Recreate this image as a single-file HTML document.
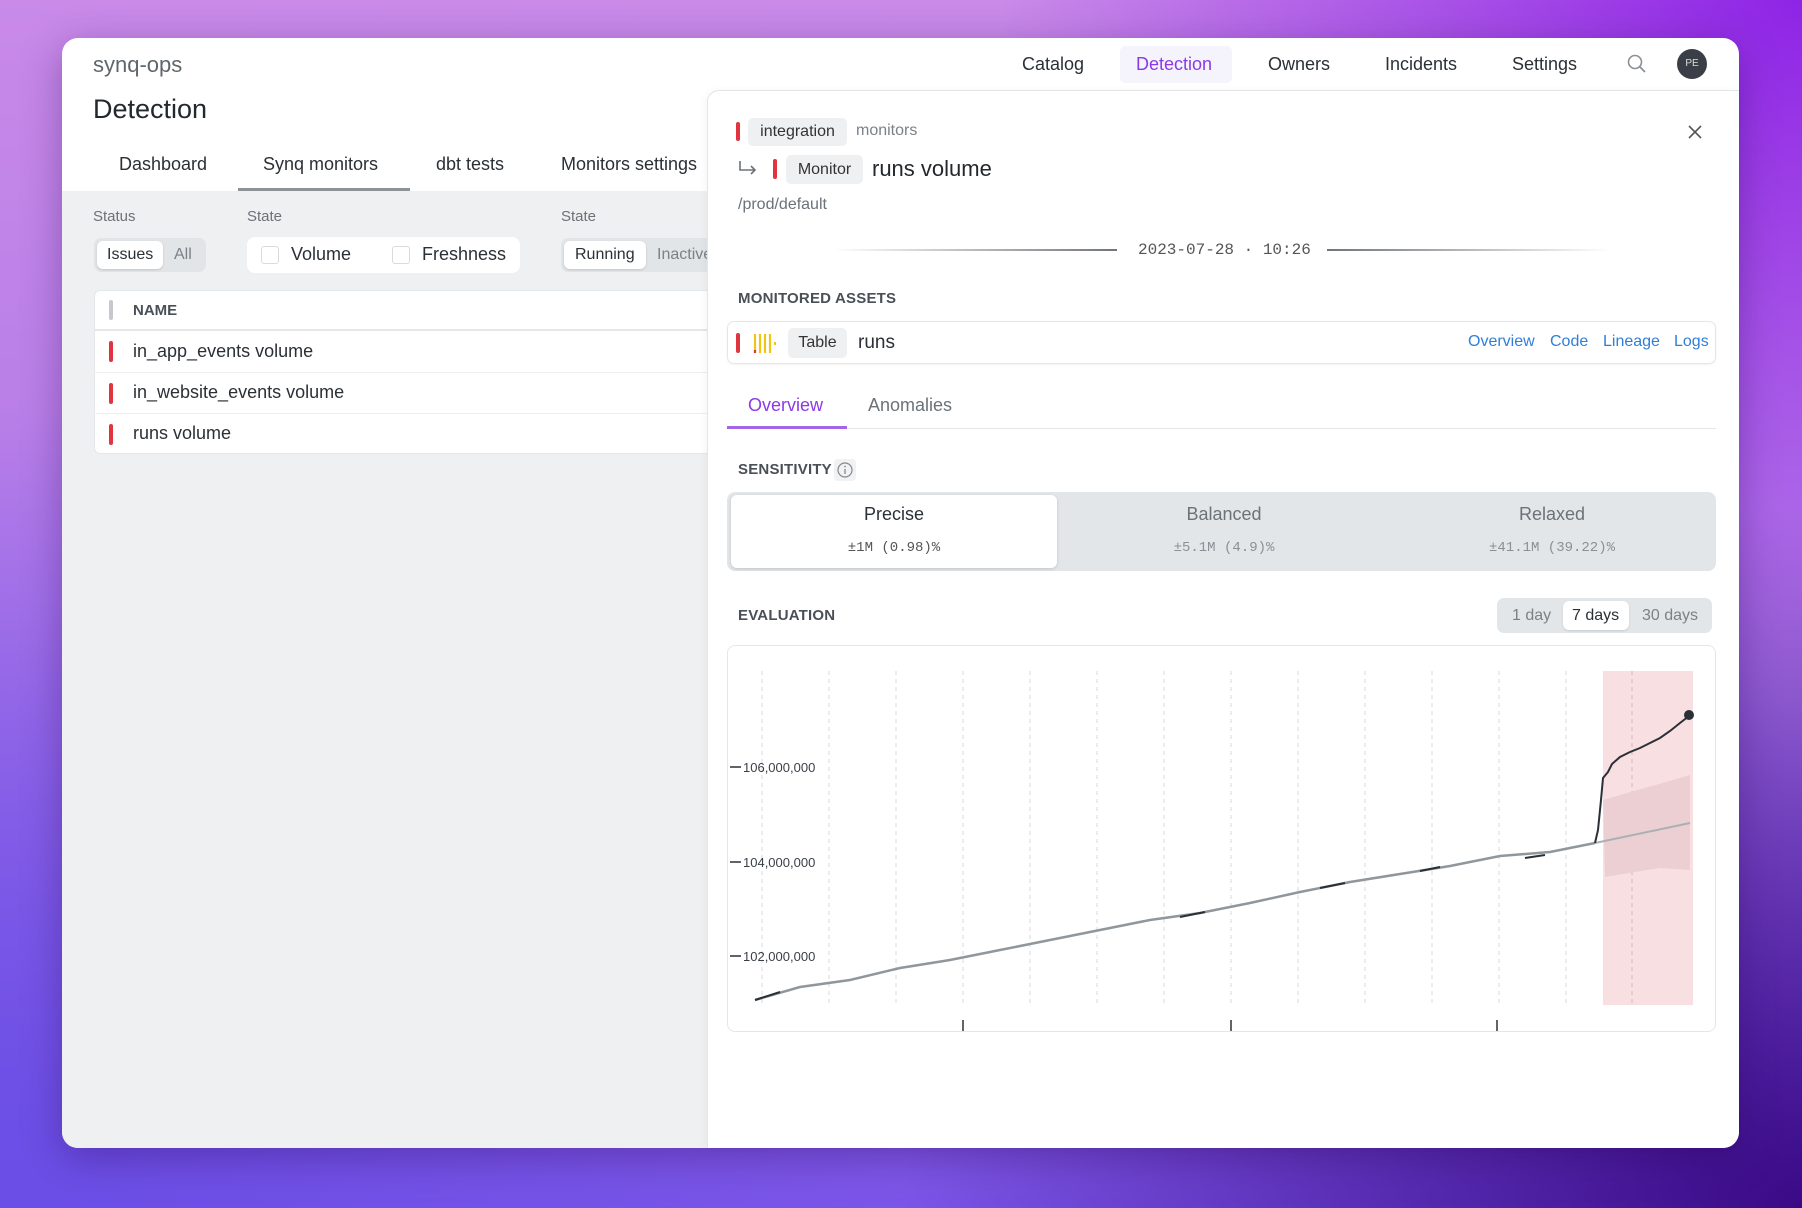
<!DOCTYPE html>
<html><head><meta charset="utf-8"><style>
*{box-sizing:border-box;margin:0;padding:0}
body{width:1802px;height:1208px;overflow:hidden;position:relative;font-family:"Liberation Sans",sans-serif;color:#2b3036;
background:
radial-gradient(ellipse 900px 700px at 1802px 1208px,#3a0a86 0%,rgba(58,10,134,0) 100%),
radial-gradient(ellipse 900px 800px at 0px 1208px,#6a4ee6 0%,rgba(106,78,230,0) 100%),
radial-gradient(ellipse 800px 700px at 1802px 0px,#8e24e6 0%,rgba(142,36,230,0) 100%),
linear-gradient(180deg,#c98ae8 0%,#b27ae8 50%,#7b55e8 100%);}
.a{position:absolute;white-space:nowrap}
.win{position:absolute;left:62px;top:38px;width:1677px;height:1110px;background:#fff;border-radius:16px;overflow:hidden;box-shadow:0 10px 40px rgba(40,0,90,.35)}
.gray{position:absolute;left:62px;top:191px;width:646px;height:957px;background:#eef0f2;border-radius:0 0 0 16px}
.tag{position:absolute;background:#eef0f2;border-radius:5px;color:#333;font-size:16px;text-align:center}
.bar{position:absolute;width:4px;border-radius:2px;background:#e0343f}
.lbl{font-weight:bold;font-size:15px;color:#4a5057;letter-spacing:.2px}
.link{color:#2f7fd8;font-size:16px}
.mono{font-family:"Liberation Mono",monospace}
</style></head><body>
<div class="win"></div>
<div class="gray"></div>

<div class="a" style="left:93px;top:52px;font-size:22px;color:#5f676d">synq-ops</div>
<div class="a" style="left:93px;top:94px;font-size:27px;color:#23282d">Detection</div>

<!-- top nav -->
<div class="a" style="left:1120px;top:46px;width:112px;height:37px;background:#f5f3fb;border-radius:6px"></div>
<div class="a" style="left:1022px;top:54px;font-size:18px">Catalog</div>
<div class="a" style="left:1136px;top:54px;font-size:18px;color:#8a3ae6">Detection</div>
<div class="a" style="left:1268px;top:54px;font-size:18px">Owners</div>
<div class="a" style="left:1385px;top:54px;font-size:18px">Incidents</div>
<div class="a" style="left:1512px;top:54px;font-size:18px">Settings</div>
<svg class="a" style="left:1625px;top:52px" width="24" height="24" viewBox="0 0 24 24"><circle cx="10" cy="10" r="6.5" fill="none" stroke="#8a9096" stroke-width="1.6"/><line x1="15" y1="15" x2="20" y2="20" stroke="#8a9096" stroke-width="1.8"/></svg>
<div class="a" style="left:1677px;top:49px;width:30px;height:30px;border-radius:50%;background:#3a3f47;color:#ddd;font-size:10px;text-align:center;line-height:30px">PE</div>

<!-- left tabs -->
<div class="a" style="left:119px;top:154px;font-size:18px">Dashboard</div>
<div class="a" style="left:263px;top:154px;font-size:18px">Synq monitors</div>
<div class="a" style="left:436px;top:154px;font-size:18px">dbt tests</div>
<div class="a" style="left:561px;top:154px;font-size:18px">Monitors settings</div>
<div class="a" style="left:238px;top:188px;width:172px;height:3px;background:#8d9297"></div>

<div class="a" style="left:93px;top:208px;font-size:15px;color:#6b7278">Status</div>
<div class="a" style="left:247px;top:208px;font-size:15px;color:#6b7278">State</div>
<div class="a" style="left:561px;top:208px;font-size:15px;color:#6b7278">State</div>

<div class="a" style="left:94px;top:238px;width:112px;height:34px;background:#e2e5e8;border-radius:7px"></div>
<div class="a" style="left:97px;top:241px;width:66px;height:28px;background:#fff;border-radius:6px;box-shadow:0 1px 2px rgba(0,0,0,.15)"></div>
<div class="a" style="left:107px;top:246px;font-size:16px">Issues</div>
<div class="a" style="left:174px;top:246px;font-size:16px;color:#7b8187">All</div>

<div class="a" style="left:247px;top:237px;width:273px;height:36px;background:#fff;border-radius:8px"></div>
<div class="a" style="left:261px;top:246px;width:18px;height:18px;border:1px solid #d8dce0;border-radius:3px"></div>
<div class="a" style="left:291px;top:244px;font-size:18px">Volume</div>
<div class="a" style="left:392px;top:246px;width:18px;height:18px;border:1px solid #d8dce0;border-radius:3px"></div>
<div class="a" style="left:422px;top:244px;font-size:18px">Freshness</div>

<div class="a" style="left:561px;top:238px;width:147px;height:34px;background:#e2e5e8;border-radius:7px 0 0 7px"></div>
<div class="a" style="left:564px;top:241px;width:82px;height:28px;background:#fff;border-radius:6px;box-shadow:0 1px 2px rgba(0,0,0,.15)"></div>
<div class="a" style="left:575px;top:246px;font-size:16px">Running</div>
<div class="a" style="left:657px;top:246px;font-size:16px;color:#7b8187;width:51px;overflow:hidden">Inactive</div>

<!-- table -->
<div class="a" style="left:94px;top:290px;width:614px;height:164px;background:#fff;border-radius:6px 0 0 6px;border:1px solid #e4e7ea;border-right:none"></div>
<div class="a" style="left:109px;top:300px;width:4px;height:20px;border-radius:2px;background:#c5c9cd"></div>
<div class="a" style="left:133px;top:302px;font-size:15px;font-weight:bold;color:#4a5057">NAME</div>
<div class="a" style="left:94px;top:329px;width:614px;height:2px;background:#e4e7ea"></div>
<div class="a" style="left:94px;top:372px;width:614px;height:1px;background:#eceef0"></div>
<div class="a" style="left:94px;top:413px;width:614px;height:1px;background:#eceef0"></div>
<div class="bar" style="left:109px;top:341px;height:21px"></div>
<div class="bar" style="left:109px;top:383px;height:21px"></div>
<div class="bar" style="left:109px;top:424px;height:21px"></div>
<div class="a" style="left:133px;top:341px;font-size:18px">in_app_events volume</div>
<div class="a" style="left:133px;top:382px;font-size:18px">in_website_events volume</div>
<div class="a" style="left:133px;top:423px;font-size:18px">runs volume</div>

<!-- right panel -->
<div class="a" style="left:707px;top:90px;width:1032px;height:1058px;background:#fff;border:1px solid #e3e6e9;border-right:none;border-bottom:none;border-radius:12px 0 16px 0;box-shadow:-2px 0 8px rgba(0,0,0,.04)"></div>

<div class="bar" style="left:736px;top:122px;height:19px"></div>
<div class="tag" style="left:748px;top:118px;width:99px;height:28px;line-height:28px">integration</div>
<div class="a" style="left:856px;top:122px;font-size:16px;color:#7b8187">monitors</div>
<svg class="a" style="left:1687px;top:124px" width="16" height="16" viewBox="0 0 16 16"><path d="M2 2L14 14M14 2L2 14" stroke="#555" stroke-width="1.6"/></svg>

<svg class="a" style="left:737px;top:159px" width="22" height="20" viewBox="0 0 22 20"><path d="M3 2V11H18M14 7L18 11L14 15" fill="none" stroke="#6b7278" stroke-width="1.6"/></svg>
<div class="bar" style="left:773px;top:159px;height:20px"></div>
<div class="tag" style="left:786px;top:155px;width:77px;height:29px;line-height:29px">Monitor</div>
<div class="a" style="left:872px;top:156px;font-size:22px;color:#23282d">runs volume</div>
<div class="a" style="left:738px;top:196px;font-size:16px;color:#6b7278">/prod/default</div>

<div class="a" style="left:833px;top:249px;width:284px;height:2px;background:linear-gradient(90deg,rgba(120,125,130,0),#6f757b)"></div>
<div class="a mono" style="left:1138px;top:241px;font-size:16px;color:#555">2023-07-28 · 10:26</div>
<div class="a" style="left:1327px;top:249px;width:284px;height:2px;background:linear-gradient(90deg,#6f757b,rgba(120,125,130,0))"></div>

<div class="a lbl" style="left:738px;top:290px">MONITORED ASSETS</div>
<div class="a" style="left:727px;top:321px;width:989px;height:43px;border:1px solid #e4e7ea;border-radius:7px;box-shadow:0 1px 2px rgba(0,0,0,.05)"></div>
<div class="bar" style="left:736px;top:333px;height:20px"></div>
<svg class="a" style="left:753px;top:333px" width="26" height="22" viewBox="0 0 26 22"><g stroke="#f2c418" stroke-width="2.2"><line x1="2" y1="1" x2="2" y2="20"/><line x1="7" y1="1" x2="7" y2="20"/><line x1="12" y1="1" x2="12" y2="20"/><line x1="17" y1="1" x2="17" y2="20"/></g><line x1="2" y1="17" x2="2" y2="20" stroke="#e0343f" stroke-width="2.2"/><rect x="21" y="9" width="2" height="3" fill="#f2c418"/></svg>
<div class="tag" style="left:788px;top:328px;width:59px;height:30px;line-height:30px">Table</div>
<div class="a" style="left:858px;top:332px;font-size:19px">runs</div>
<div class="a link" style="left:1468px;top:333px">Overview</div>
<div class="a link" style="left:1550px;top:333px">Code</div>
<div class="a link" style="left:1603px;top:333px">Lineage</div>
<div class="a link" style="left:1674px;top:333px">Logs</div>

<div class="a" style="left:748px;top:395px;font-size:18px;color:#8a3ae6">Overview</div>
<div class="a" style="left:868px;top:395px;font-size:18px;color:#6b7278">Anomalies</div>
<div class="a" style="left:727px;top:428px;width:989px;height:1px;background:#e4e7ea"></div>
<div class="a" style="left:727px;top:426px;width:120px;height:3px;background:#a466e8"></div>

<div class="a lbl" style="left:738px;top:461px">SENSITIVITY</div>
<div class="a" style="left:834px;top:459px;width:22px;height:22px;background:#f0f2f4;border-radius:4px"></div>
<svg class="a" style="left:836px;top:461px" width="18" height="18" viewBox="0 0 18 18"><circle cx="9" cy="9" r="7" fill="none" stroke="#888" stroke-width="1.2"/><line x1="9" y1="8" x2="9" y2="13" stroke="#888" stroke-width="1.3"/><circle cx="9" cy="5.5" r=".9" fill="#888"/></svg>

<div class="a" style="left:727px;top:492px;width:989px;height:79px;background:#e2e6e9;border-radius:8px"></div>
<div class="a" style="left:731px;top:495px;width:326px;height:73px;background:#fff;border-radius:6px;box-shadow:0 1px 3px rgba(0,0,0,.15)"></div>
<div class="a" style="left:731px;top:504px;width:326px;text-align:center;font-size:18px">Precise</div>
<div class="a mono" style="left:731px;top:540px;width:326px;text-align:center;font-size:14px;color:#555">±1M (0.98)%</div>
<div class="a" style="left:1060px;top:504px;width:328px;text-align:center;font-size:18px;color:#6b7278">Balanced</div>
<div class="a mono" style="left:1060px;top:540px;width:328px;text-align:center;font-size:14px;color:#8a9096">±5.1M (4.9)%</div>
<div class="a" style="left:1388px;top:504px;width:328px;text-align:center;font-size:18px;color:#6b7278">Relaxed</div>
<div class="a mono" style="left:1388px;top:540px;width:328px;text-align:center;font-size:14px;color:#8a9096">±41.1M (39.22)%</div>

<div class="a lbl" style="left:738px;top:607px">EVALUATION</div>
<div class="a" style="left:1497px;top:598px;width:215px;height:35px;background:#e2e6e9;border-radius:7px"></div>
<div class="a" style="left:1563px;top:601px;width:66px;height:29px;background:#fff;border-radius:6px;box-shadow:0 1px 2px rgba(0,0,0,.12)"></div>
<div class="a" style="left:1512px;top:607px;font-size:16px;color:#7b8187">1 day</div>
<div class="a" style="left:1572px;top:607px;font-size:16px">7 days</div>
<div class="a" style="left:1642px;top:607px;font-size:16px;color:#7b8187">30 days</div>

<div class="a" style="left:727px;top:645px;width:989px;height:387px;border:1px solid #e4e7ea;border-radius:8px"></div>
<svg class="a" style="left:0;top:0" width="1802" height="1208">
<rect x="1603" y="671" width="90" height="334" fill="#f8e0e2"/>
<g stroke="#d6d9dc" stroke-width="1" stroke-dasharray="4,4">
<line x1="762" y1="671" x2="762" y2="1005"/><line x1="829" y1="671" x2="829" y2="1005"/><line x1="896" y1="671" x2="896" y2="1005"/><line x1="963" y1="671" x2="963" y2="1005"/><line x1="1030" y1="671" x2="1030" y2="1005"/><line x1="1097" y1="671" x2="1097" y2="1005"/><line x1="1164" y1="671" x2="1164" y2="1005"/><line x1="1231" y1="671" x2="1231" y2="1005"/><line x1="1298" y1="671" x2="1298" y2="1005"/><line x1="1365" y1="671" x2="1365" y2="1005"/><line x1="1432" y1="671" x2="1432" y2="1005"/><line x1="1499" y1="671" x2="1499" y2="1005"/><line x1="1566" y1="671" x2="1566" y2="1005"/><line x1="1632" y1="671" x2="1632" y2="1005" stroke="#d8b4b8"/>
</g>
<path d="M1603 800 L1690 775 L1690 870 L1660 868 L1605 877 Z" fill="#eccfd3"/>
<path d="M1595 843 L1690 823" stroke="#a9b1b6" stroke-width="2" fill="none"/>
<path d="M755 1000 L800 987 L850 980 L900 968 L950 960 L1000 950 L1050 940 L1100 930 L1150 920 L1200 913 L1250 903 L1300 892 L1350 882 L1400 874 L1450 866 L1500 856 L1550 852 L1595 843" stroke="#8f979c" stroke-width="2.5" fill="none"/>
<path d="M755 1000 L780 992 M1180 917 L1205 912 M1320 888 L1345 883 M1420 871 L1440 867 M1525 858 L1545 855" stroke="#2b3036" stroke-width="2" fill="none"/>
<path d="M1595 843 L1598 830 L1601 800 L1603 778 L1608 772 L1612 764 L1620 757 L1630 752 L1640 748 L1650 743 L1660 738 L1670 731 L1680 723 L1689 716" stroke="#2b3036" stroke-width="2" fill="none"/>
<circle cx="1689" cy="715" r="5" fill="#2b3036"/>
<g stroke="#2b3036" stroke-width="1.5"><line x1="730" y1="767" x2="741" y2="767"/><line x1="730" y1="862" x2="741" y2="862"/><line x1="730" y1="956" x2="741" y2="956"/>
<line x1="963" y1="1020" x2="963" y2="1031"/><line x1="1231" y1="1020" x2="1231" y2="1031"/><line x1="1497" y1="1020" x2="1497" y2="1031"/></g>
<g font-family="Liberation Sans, sans-serif" font-size="13" fill="#3a3f45"><text x="743" y="772">106,000,000</text><text x="743" y="867">104,000,000</text><text x="743" y="961">102,000,000</text></g>
</svg>
</body></html>
